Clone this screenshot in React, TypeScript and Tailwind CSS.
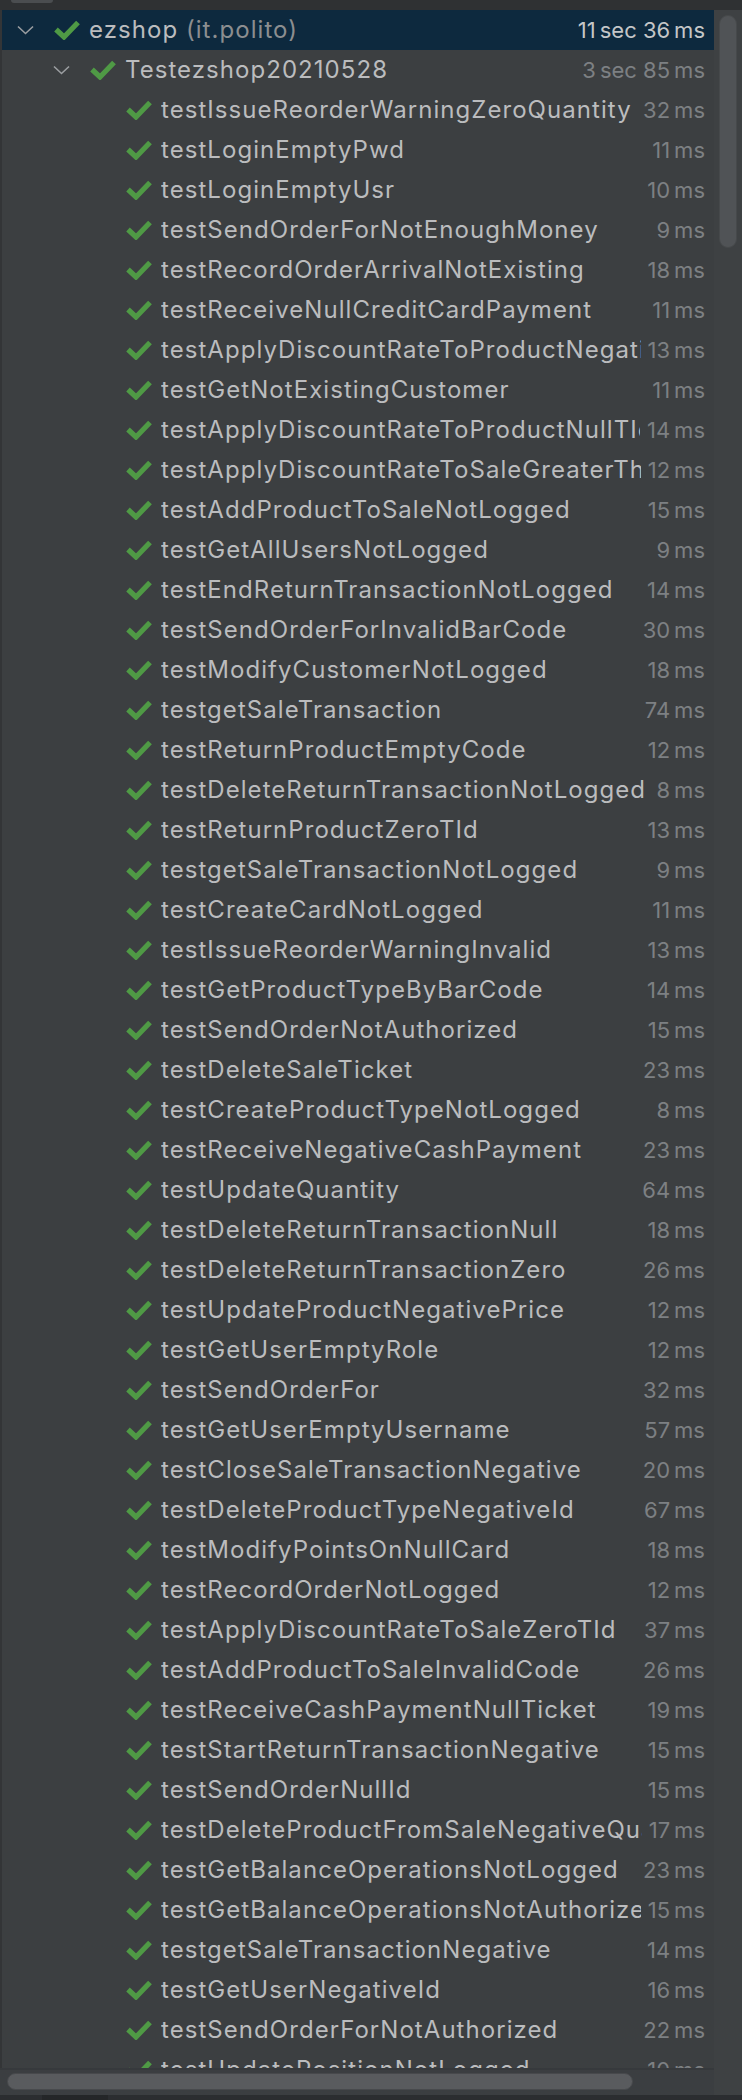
import React from "react";

type Row = { name: string; pkg?: string; time: string; level: number; expanded?: boolean; selected?: boolean };

const T = "\u2009";
const ms = (n: number) => `${n}${T}ms`;

const tests: [string, number][] = [
  ["testIssueReorderWarningZeroQuantity", 32],
  ["testLoginEmptyPwd", 11],
  ["testLoginEmptyUsr", 10],
  ["testSendOrderForNotEnoughMoney", 9],
  ["testRecordOrderArrivalNotExisting", 18],
  ["testReceiveNullCreditCardPayment", 11],
  ["testApplyDiscountRateToProductNegativeRate", 13],
  ["testGetNotExistingCustomer", 11],
  ["testApplyDiscountRateToProductNullTId", 14],
  ["testApplyDiscountRateToSaleGreaterThanOne", 12],
  ["testAddProductToSaleNotLogged", 15],
  ["testGetAllUsersNotLogged", 9],
  ["testEndReturnTransactionNotLogged", 14],
  ["testSendOrderForInvalidBarCode", 30],
  ["testModifyCustomerNotLogged", 18],
  ["testgetSaleTransaction", 74],
  ["testReturnProductEmptyCode", 12],
  ["testDeleteReturnTransactionNotLogged", 8],
  ["testReturnProductZeroTId", 13],
  ["testgetSaleTransactionNotLogged", 9],
  ["testCreateCardNotLogged", 11],
  ["testIssueReorderWarningInvalid", 13],
  ["testGetProductTypeByBarCode", 14],
  ["testSendOrderNotAuthorized", 15],
  ["testDeleteSaleTicket", 23],
  ["testCreateProductTypeNotLogged", 8],
  ["testReceiveNegativeCashPayment", 23],
  ["testUpdateQuantity", 64],
  ["testDeleteReturnTransactionNull", 18],
  ["testDeleteReturnTransactionZero", 26],
  ["testUpdateProductNegativePrice", 12],
  ["testGetUserEmptyRole", 12],
  ["testSendOrderFor", 32],
  ["testGetUserEmptyUsername", 57],
  ["testCloseSaleTransactionNegative", 20],
  ["testDeleteProductTypeNegativeId", 67],
  ["testModifyPointsOnNullCard", 18],
  ["testRecordOrderNotLogged", 12],
  ["testApplyDiscountRateToSaleZeroTId", 37],
  ["testAddProductToSaleInvalidCode", 26],
  ["testReceiveCashPaymentNullTicket", 19],
  ["testStartReturnTransactionNegative", 15],
  ["testSendOrderNullId", 15],
  ["testDeleteProductFromSaleNegativeQuantity", 17],
  ["testGetBalanceOperationsNotLogged", 23],
  ["testGetBalanceOperationsNotAuthorized", 15],
  ["testgetSaleTransactionNegative", 14],
  ["testGetUserNegativeId", 16],
  ["testSendOrderForNotAuthorized", 22],
  ["testUpdatePositionNotLogged", 10],
];

const rows: Row[] = [
  { name: "ezshop", pkg: "(it.polito)", time: `11${T}sec 36${T}ms`, level: 0, expanded: true, selected: true },
  { name: "Testezshop20210528", time: `3${T}sec 85${T}ms`, level: 1, expanded: true },
  ...tests.map(([n, t]) => ({ name: n, time: ms(t), level: 2 })),
];

function Check() {
  return (
    <svg width="26" height="20" viewBox="0 0 26 20" className="shrink-0">
      <polyline points="2,9.5 10,17 24,2.5" fill="none" stroke="#4f9a45" strokeWidth="5.2" strokeLinejoin="miter" />
    </svg>
  );
}

function Chevron() {
  return (
    <svg width="17" height="10" viewBox="0 0 17 10" className="shrink-0">
      <polyline points="1,1.5 8.5,8.5 16,1.5" fill="none" stroke="#9b9ea1" strokeWidth="1.6" />
    </svg>
  );
}

function TreeRow({ r }: { r: Row }) {
  const indent = r.level === 0 ? "pl-[15px]" : r.level === 1 ? "pl-[51px]" : "pl-[87px]";
  return (
    <div className={`flex items-center h-[40px] pr-[9px] ${indent} ${r.selected ? "bg-[#0d293e]" : ""}`}>
      <div className="w-[37px] shrink-0 flex items-center">{r.expanded ? <Chevron /> : null}</div>
      <div className="w-[35px] shrink-0 flex items-center">
        <Check />
      </div>
      <div className="flex-1 min-w-0 overflow-hidden whitespace-nowrap text-[24px] tracking-[1.05px] text-[#bbbcbe]">
        {r.name}
        {r.pkg ? <span className="text-[#8c8e90]"> {r.pkg}</span> : null}
      </div>
      <div
        className={`shrink-0 ml-[7px] whitespace-nowrap text-[22px] ${r.selected ? "text-[#c4c6c8]" : "text-[#7d8083]"}`}
      >
        {r.time}
      </div>
    </div>
  );
}

export default function App() {
  return (
    <div
      className="w-[742px] h-[2100px] bg-[#3c3f41] flex flex-col overflow-hidden"
      style={{ fontFamily: "Inter, 'Noto Sans', sans-serif" }}
    >
      <div className="h-[10px] shrink-0 bg-[#2f3133] pl-[11px]">
        <div className="w-[42px] h-[3px] rounded-b-[3px] bg-[#4a4d50]" />
      </div>
      <div className="flex flex-row h-[2085px] shrink-0">
        <div className="w-[714px] flex flex-col">
          <div className="h-[2058px] overflow-hidden border-l-2 border-[#333537]">
            {rows.map((r, i) => (
              <TreeRow key={i} r={r} />
            ))}
          </div>
          <div className="h-[27px] border-t-2 border-[#36393c] bg-[#3b3e41] pl-[7px] pt-[3px]">
            <div className="w-[626px] h-[17px] rounded-full bg-[#595b5e] border border-[#47494c]" />
          </div>
        </div>
        <div className="w-[28px] bg-[#3e4143] pt-[5px] pl-[5px]">
          <div className="w-[18px] h-[233px] rounded-full bg-[#505356] border border-[#46494b]" />
        </div>
      </div>
      <div className="h-[5px] shrink-0 bg-[#2b2d30] pl-[42px]">
        <div className="w-[66px] h-[5px] bg-[#242628]" />
      </div>
    </div>
  );
}
